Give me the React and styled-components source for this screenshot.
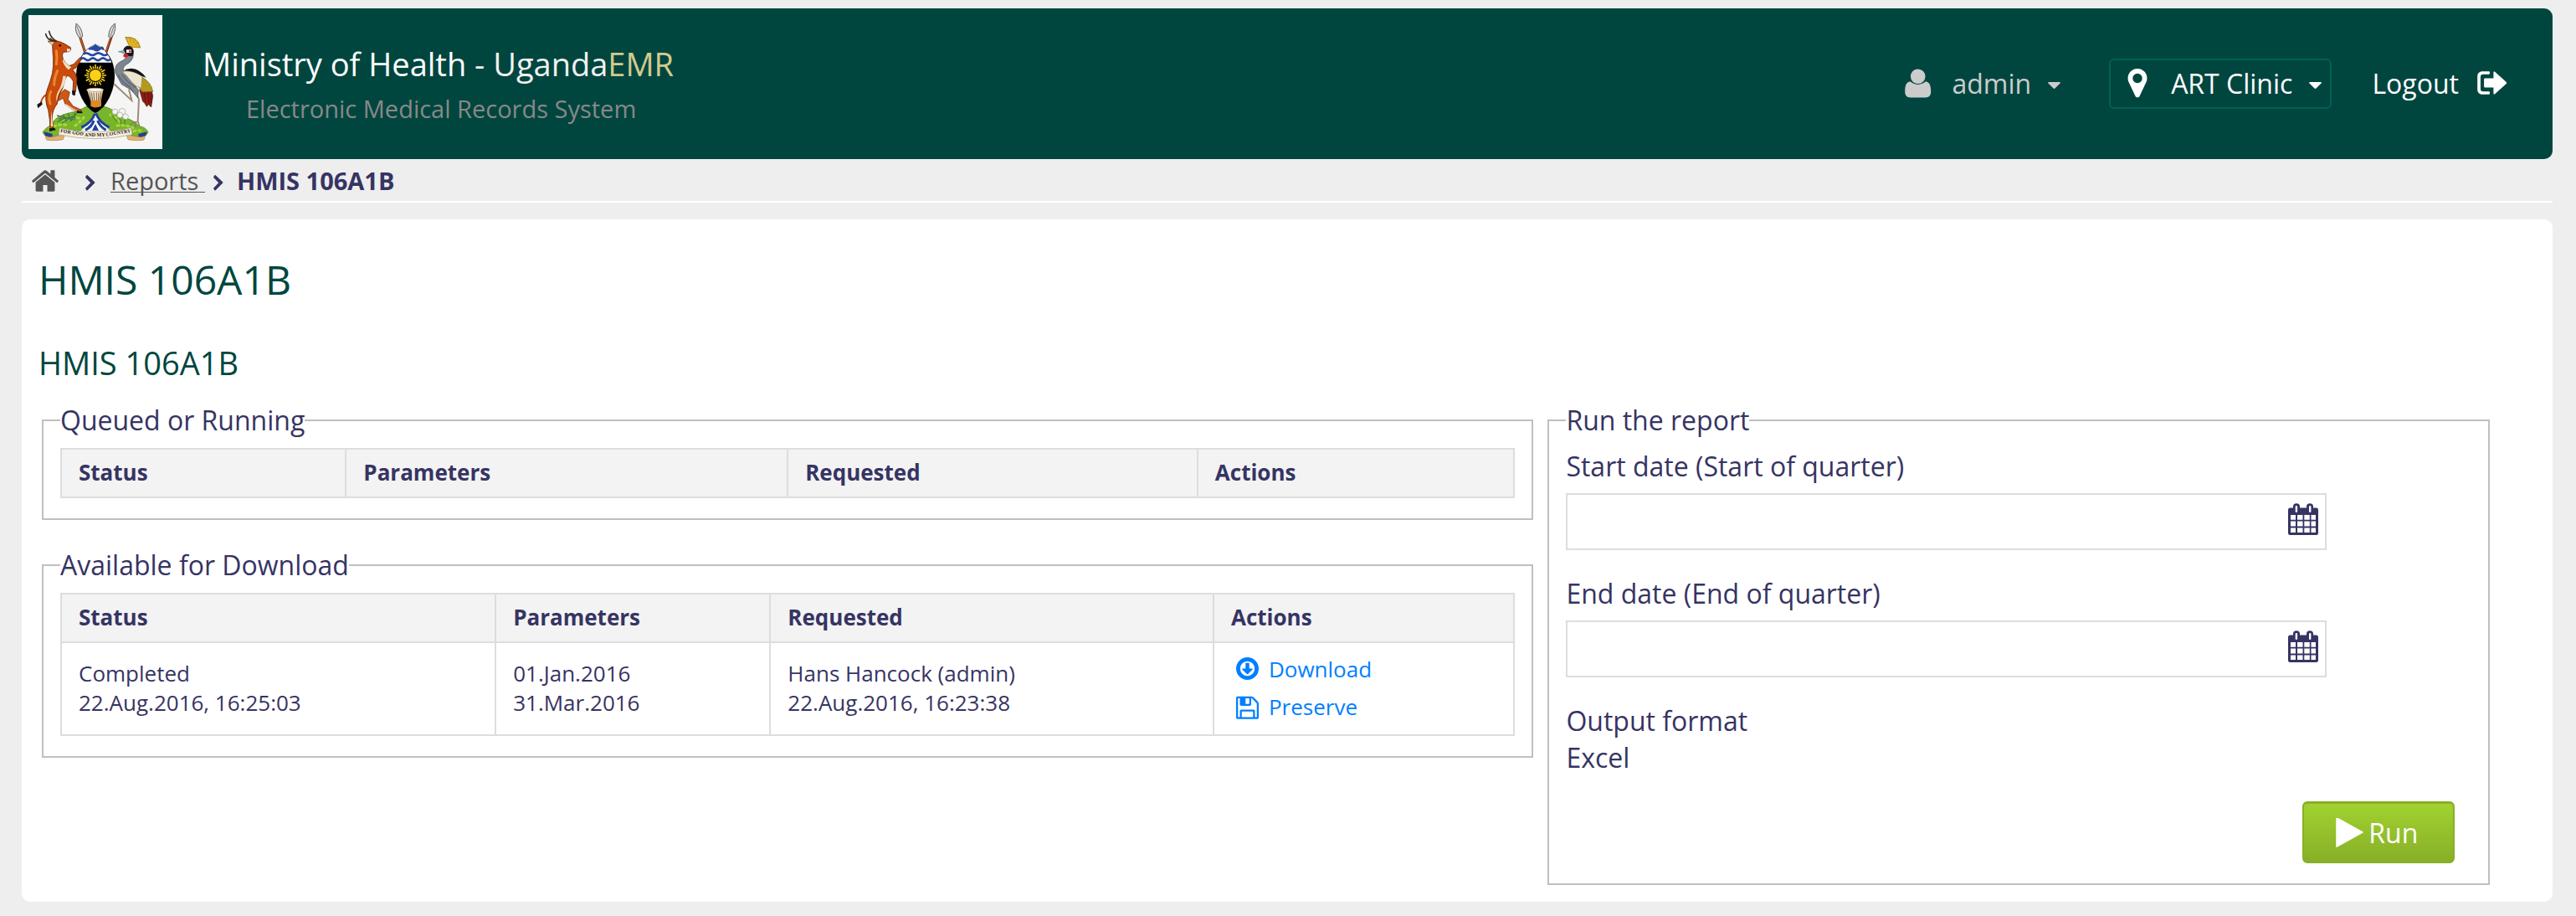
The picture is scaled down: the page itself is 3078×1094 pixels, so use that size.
import React from "react";
import styled, { createGlobalStyle } from "styled-components";

const colors = {
  page: "#eeeeee",
  brand: "#00463f",
  brandLine: "#006056",
  ink: "#363463",
  grey: "#555555",
  line: "#dddddd",
  fieldset: "#c0c0c0",
  link: "#007fff",
};

const GlobalStyle = createGlobalStyle`
  * { box-sizing: border-box; }
  body {
    margin: 0;
    background: ${colors.page};
    color: ${colors.ink};
    font-family: "Open Sans", "Noto Sans", sans-serif;
    font-size: 32px;
    line-height: 44px;
  }
  button, input { font: inherit; color: inherit; }
`;

const Page = styled.div`
  padding: 10px 28px 16px 26px;
`;

const Header = styled.header`
  display: flex;
  align-items: center;
  min-height: 180px;
  padding: 8px 54px 8px 8px;
  border-radius: 10px;
  background: ${colors.brand};
  color: #fff;
`;

const Logo = styled.a`
  display: block;
  align-self: flex-start;
  width: 160px;
  height: 160px;
  background: #f5f5f5;
`;

const Brand = styled.div`
  flex: 1;
  display: flex;
  flex-direction: column;
  gap: 8px;
  padding-left: 48px;
`;

const BrandName = styled.div`
  font-size: 38px;
  line-height: 52px;
`;

const Product = styled.span`
  color: #f1f1f1;
  em {
    font-style: normal;
    color: #d3ca8e;
  }
`;

const Tagline = styled.div`
  padding-left: 52px;
  font-size: 29px;
  line-height: 40px;
  color: #888888;
`;

const Nav = styled.nav`
  display: flex;
  align-items: center;
`;

const NavButton = styled.button`
  display: flex;
  align-items: center;
  gap: 20px;
  margin-right: ${(p) => (p.$framed ? 48 : 58)}px;
  padding: ${(p) => (p.$framed ? "6px 10px 6px 20px" : "8px 0")};
  border: ${(p) => (p.$framed ? `2px solid ${colors.brandLine}` : "0")};
  border-radius: 6px;
  background: none;
  color: ${(p) => (p.$framed ? "#fff" : "#cccccc")};
  cursor: pointer;
`;

const NavText = styled.span`
  padding-left: ${(p) => (p.$wide ? 8 : 4)}px;
`;

const LogoutLink = styled.a`
  display: flex;
  align-items: center;
  gap: 22px;
  color: #fff;
  text-decoration: none;
`;

const Icon = styled.svg`
  display: block;
  flex: none;
  fill: currentColor;
`;

const Crumbs = styled.nav`
  display: flex;
  align-items: center;
  padding: 6px 12px 4px;
  border-bottom: 2px solid #fff;
  font-size: 29px;
  line-height: 40px;
`;

const HomeLink = styled.a`
  padding-right: 32px;
  color: ${colors.grey};
`;

const CrumbLink = styled.a`
  padding: 0 10px 0 18px;
  color: ${colors.grey};
  text-decoration-thickness: 1px;
  text-underline-offset: 2px;
  text-decoration-skip-ink: none;
`;

const CrumbCurrent = styled.span`
  padding-left: 16px;
  font-weight: 700;
`;

const Panel = styled.main`
  margin-top: 20px;
  padding: 39px 20px 20px;
  border-radius: 10px;
  background: #fff;
`;

const PageTitle = styled.h1`
  margin: 0 0 40px;
  font-size: 48px;
  line-height: 66px;
  font-weight: 400;
  color: ${colors.brand};
`;

const ReportTitle = styled.h2`
  margin: 0 0 21px;
  font-size: 38px;
  line-height: 52px;
  font-weight: 400;
  color: ${colors.brand};
`;

const Columns = styled.div`
  display: grid;
  grid-template-columns: 60% 38%;
  gap: 9px;
  align-items: start;
`;

const Fieldset = styled.fieldset`
  min-width: 0;
  margin: 0 4px;
  padding: 11px 20px 24px;
  border: 2px solid ${colors.fieldset};

  & + & {
    margin-top: 32px;
  }
`;

const Legend = styled.legend`
  padding: 0;
`;

const Table = styled.table`
  width: 100%;
  table-layout: fixed;
  border-collapse: collapse;
  font-size: 26px;
  line-height: 35px;
`;

const Th = styled.th`
  width: ${(p) => p.$w}%;
  padding: 10px 20px 11px;
  border: 2px solid ${colors.line};
  background: #f3f3f3;
  text-align: left;
  font-weight: 700;
`;

const Td = styled.td`
  padding: 9px 20px 10px;
  border: 2px solid ${colors.line};
  vertical-align: middle;
`;

const Action = styled.a`
  display: flex;
  align-items: center;
  gap: 12px;
  padding: 5px 0 5px 6px;
  color: ${colors.link};
  text-decoration: none;
`;

const Field = styled.div`
  width: 84%;
  margin-bottom: 30px;
`;

const Label = styled.label`
  display: block;
  margin-bottom: 10px;
`;

const DateBox = styled.div`
  display: flex;
  align-items: flex-start;
  height: 68px;
  border: 2px solid ${colors.line};
`;

const DateInput = styled.input`
  flex: 1;
  min-width: 0;
  height: 100%;
  padding: 0 10px;
  border: 0;
  background: transparent;
`;

const IconButton = styled.button`
  padding: 10px 8px;
  border: 0;
  background: none;
  cursor: pointer;
`;

const Output = styled.div`
  margin-bottom: 30px;
`;

const Footer = styled.div`
  display: flex;
  justify-content: flex-end;
  padding-right: 20px;
`;

const RunButton = styled.button`
  display: flex;
  align-items: center;
  gap: 6px;
  height: 74px;
  padding: 0 42px 0 38px;
  border: 2px solid #88af28;
  border-top-width: 3px;
  border-radius: 6px;
  background: linear-gradient(#a1d22f, #88af28);
  color: #fff;
  cursor: pointer;
`;

const Motto = styled.text`
  font-family: "Liberation Serif", serif;
  font-size: 18px;
  font-weight: 700;
  text-anchor: middle;
  fill: #222;
`;

const HomeIcon = () => (
  <Icon width="32" height="26" viewBox="89 253 1614 1283" aria-hidden="true">
    <path d="M1472 992v480q0 26-19 45t-45 19h-384v-384h-256v384h-384q-26 0-45-19t-19-45v-480q0-1 .5-3t.5-3l575-474 575 474q1 2 1 6zm223-69l-62 74q-8 9-21 11h-3q-13 0-21-7l-692-577-692 577q-12 8-24 7-13-2-21-11l-62-74q-8-10-7-23.5t11-21.5l719-599q32-26 76-26t76 26l244 204v-195q0-14 9-23t23-9h192q14 0 23 9t9 23v408l219 182q10 8 11 21.5t-7 23.5z" />
  </Icon>
);

const ChevronIcon = () => (
  <Icon width="12" height="40" viewBox="0 0 12 40" aria-hidden="true">
    <path d="M2.6 13.2 11 21.2q.8.8 0 1.6L2.6 31.2q-.6.5-1.1 0L.3 29.6q-.5-.6 0-1.2L6.2 22.2.3 16.2q-.5-.6 0-1.2l1.2-1.8q.5-.5 1.1 0z" />
  </Icon>
);

const UserIcon = () => (
  <Icon width="32" height="36" viewBox="0 0 32 36" aria-hidden="true">
    <circle cx="15.7" cy="9.2" r="8.8" />
    <path d="M6.5 15.3C1.8 15.9.2 20.2.2 27.5c0 4.800 2.600 6.900 6.300 6.900h18.400c3.700 0 6.300-2.100 6.300-6.900 0-7.300-1.600-11.600-6.300-12.200-2.300 2-5.300 3.600-9.200 3.600s-6.900-1.600-9.200-3.600z" />
  </Icon>
);

const PinIcon = () => (
  <Icon width="24" height="36" viewBox="384 128 1024 1610" aria-hidden="true">
    <path d="M1152 640q0-106-75-181t-181-75-181 75-75 181 75 181 181 75 181-75 75-181zm256 0q0 109-33 179l-364 774q-16 33-47.500 52t-67.500 19-67.500-19-46.500-52l-365-774q-33-70-33-179 0-212 150-362t362-150 362 150 150 362z" />
  </Icon>
);

const CaretIcon = () => (
  <Icon width="15" height="20" viewBox="0 0 15 20" aria-hidden="true">
    <path d="M1 8h13q1.300.3.500 1.500l-6 6q-1 .8-2 0l-6-6Q-.3 8.300 1 8z" />
  </Icon>
);

const LogoutIcon = () => (
  <Icon width="36" height="30" viewBox="0 0 36 30" aria-hidden="true">
    <path d="M14 .2H6.500C2.500.2.200 2.500.200 6.500v15c0 4 2.300 6.300 6.300 6.300H14q1-.1 1-1.200v-1.200q0-1-1-1.100H7c-2 0-3.100-1-3.100-3V6.700c0-2 1.100-3 3.100-3h7q1-.1 1-1.200V1.400Q15 .2 14 .2z" />
    <path d="M9.400 8.500h10V2q0-2.700 2-1.100l13.300 12.200q1 .9 0 1.800L21.400 27.100q-2 1.600-2-1.100v-6.500h-10q-1.300 0-1.300-1.300V9.800q0-1.300 1.300-1.300z" />
  </Icon>
);

const DownloadIcon = () => (
  <Icon width="27" height="32" viewBox="0 0 27 32" aria-hidden="true">
    <path fillRule="evenodd" d="M13.500 1a13.500 13.500 0 1 1 0 27 13.500 13.500 0 0 1 0-27zm0 4.800a8.700 8.700 0 1 0 0 17.400 8.700 8.700 0 0 0 0-17.400z" />
    <path d="M11.300 7.700h4.400v6.700h3.700q1 .3.300 1.100l-5.500 5.500q-.7.600-1.400 0l-5.500-5.500q-.7-.8.300-1.100h3.700z" />
  </Icon>
);

const SaveIcon = () => (
  <Icon width="27" height="28" viewBox="128 90 1536 1593" aria-hidden="true">
    <path d="M512 1536h768v-384h-768v384zm896 0h128v-896q0-14-10-38.500t-20-34.500l-281-281q-10-10-34-20t-39-10v416q0 40-28 68t-68 28h-576q-40 0-68-28t-28-68v-416h-128v1280h128v-416q0-40 28-68t68-28h832q40 0 68 28t28 68v416zm-384-928v-320q0-13-9.500-22.500t-22.500-9.500h-192q-13 0-22.500 9.500t-9.500 22.500v320q0 13 9.500 22.500t22.500 9.500h192q13 0 22.500-9.500t9.500-22.500zm640 32v928q0 40-28 68t-68 28h-1344q-40 0-68-28t-28-68v-1344q0-40 28-68t68-28h928q40 0 88 20t76 48l280 280q28 28 48 76t20 88z" />
  </Icon>
);

const CalendarIcon = () => (
  <Icon width="36" height="39" viewBox="0 0 36 39" aria-hidden="true">
    <path
      fillRule="evenodd"
      d="M2.500 5.500H6V4q0-3.700 4-3.700T14 4v1.500h8V4q0-3.700 4-3.700T30 4v1.500h3.500Q36 5.500 36 8v27.500q0 2.500-2.500 2.500h-31Q0 38 0 35.500V8q0-2.500 2.500-2.500zM8.700 4v6q0 1 1.200 1t1.200-1V4q0-1-1.200-1T8.700 4zM25 4v6q0 1 1.200 1t1.200-1V4q0-1-1.200-1T25 4zM3 14v5.800h6V14zm8 0v5.800h6.500V14zm8.300 0v5.800h6.500V14zm8.200 0v5.800H33V14zM3 21.600v6h6v-6zm8 0v6h6.500v-6zm8.300 0v6h6.500v-6zm8.200 0v6H33v-6zM3 29.400v5.600h6v-5.600zm8 0v5.600h6.500v-5.600zm8.300 0v5.600h6.500v-5.600zm8.200 0v5.600H33v-5.600z"
    />
  </Icon>
);

const PlayIcon = () => (
  <Icon width="33" height="36" viewBox="192 160 1407 1558" aria-hidden="true">
    <path d="M1576 927l-1328 738q-23 13-39.500 3t-16.500-36v-1472q0-26 16.500-36t39.500 3l1328 738q23 13 23 31t-23 31z" />
  </Icon>
);

const sunRays = Array.from({ length: 24 }, (_, i) => i * 15);

const CoatOfArms = () => (
  <svg width="160" height="160" viewBox="102 54 480 480" role="img" aria-label="Uganda coat of arms">
    {/* spears */}
    <g>
      <path d="M282 118 382 420M404 118 302 420" stroke="#6b2410" strokeWidth="9" />
      <path d="M284 124 382 420M400 124 302 420" stroke="#bf5a24" strokeWidth="5" />
      <path d="M273 84q21 14 23 47l-8 6q-15-12-17-34z" fill="#d9d9d9" stroke="#444" strokeWidth="2.5" />
      <path d="M412 84q-21 14-23 47l8 6q14-12 16-34z" fill="#d9d9d9" stroke="#444" strokeWidth="2.5" />
      <path d="M275 92l15 40M409 92l-14 40" stroke="#555" strokeWidth="2" />
    </g>

    {/* mound */}
    <path d="M153 474Q160 460 186 446Q196 416 250 404Q284 398 304 384Q322 378 342 400Q364 378 382 384Q404 392 452 422Q484 434 500 452Q524 456 531 474Q526 488 500 494Q420 462 342 462Q262 462 180 494Q158 488 153 474Z" fill="#78b52a" stroke="#4c7c1a" strokeWidth="2" />
    <path d="M178 460q30-18 60-12M225 434q30-16 64-10M270 450q20-16 34-34M395 412q24 8 34 24M420 450q32-4 56 8M480 470q16-6 34 2" stroke="#a9d63c" strokeWidth="9" fill="none" strokeLinecap="round" strokeDasharray="6 12" />
    <path d="M204 414l60 14M210 426l54-6M222 440l40-24M238 436l-12-26M254 434l-10-28M268 430l-2-26M206 436l24-10M276 402l-22 32" stroke="#477a45" strokeWidth="4" fill="none" />
    <g fill="#f4f4f4" stroke="#9aa88e" strokeWidth="2">
      <circle cx="412" cy="400" r="10" />
      <circle cx="438" cy="400" r="12" />
      <circle cx="430" cy="412" r="10" />
      <circle cx="450" cy="418" r="10" />
    </g>
    <path d="M400 412l20 24M428 424l8 20M448 428l-2 18" stroke="#4f8b2c" strokeWidth="4" />

    {/* river */}
    <path d="M336 404h12q10 34 46 64h-104q36-30 46-64z" fill="#fff" />
    <g stroke="#20419a" strokeWidth="9" fill="none">
      <path d="M340 406q-10 34-48 50M344 406q12 34 48 50" />
      <path d="M336 432q-6 22-30 34M350 432q8 22 30 34" />
    </g>
    <path d="M342 444l12 24h-24z" fill="#20419a" />

    {/* shield */}
    <path d="M342 157c44 22 68 60 69 112 0 58-30 116-69 136-39-20-69-78-69-136 1-52 25-90 69-112z" fill="#000" />
    <path d="M342 157c26 14 46 34 58 67H284c12-33 32-53 58-67z" fill="#fff" />
    <g fill="none" stroke="#274a9e" strokeWidth="8">
      <path d="M318 177q10-8 20 0t20-2 12 4" />
      <path d="M298 194q11-8 22 0t22 0 22 0 22 0" />
      <path d="M288 212q9-8 18 0t18 0 18 0 18 0 18 0 18 0" />
    </g>
    <path d="M342 158q14 8 24 18-24 8-48 0 10-10 24-18z" fill="#274a9e" />
    <g stroke="#f6d21c" strokeWidth="4.5">
      {sunRays.map((angle) => (
        <path key={angle} d={angle % 30 ? "M342 246v-9" : "M342 246v-15"} transform={`rotate(${angle} 342 270)`} />
      ))}
    </g>
    <circle cx="342" cy="270" r="22" fill="#fbd116" stroke="#1a1200" strokeWidth="2" />
    <path d="M312 322h58l-7 38v20q-22 10-38 0v-20z" fill="#c98b3b" />
    <path d="M313 324l12 36h32l12-36z" fill="#efe4d0" />
    <path d="M320 330l7 28M328 332l4 28M336 332l2 28M346 332v28M354 332l-2 28M362 330l-5 28" stroke="#6b4a2a" strokeWidth="2.5" />
    <ellipse cx="341" cy="322" rx="30" ry="6" fill="#fff" stroke="#bda27c" strokeWidth="3" />
    <path d="M326 362h32l-2 18q-14 10-28 0z" fill="#e08b1c" />

    {/* kob */}
    <path d="M192 150Q168 142 164 122M204 148Q182 138 176 112M208 150Q190 148 180 138" fill="none" stroke="#3b2c20" strokeWidth="5" strokeLinecap="round" />
    <path d="M168 338Q150 348 146 370" fill="none" stroke="#c64a0e" strokeWidth="6" />
    <path d="M150 364L152 374L136 388L133 374Z" fill="#161616" />
    <path d="M210 340L232 320L250 330L244 356L262 380L292 394L290 402L262 394L234 374L226 352L208 362Z" fill="#cf5714" stroke="#6e2606" strokeWidth="2" />
    <path d="M236 372L264 390L286 400L262 394L234 376Z" fill="#f2dcb6" />
    <path d="M188 156L172 148L194 149Q210 144 230 156L253 170Q257 180 248 185L226 187Q221 198 226 212Q234 230 248 236L264 230L287 206L291 214L273 242L260 250Q273 260 276 282L271 328L261 328L263 292Q256 276 242 270Q233 278 230 298Q226 318 214 336Q206 352 205 372Q188 392 187 420L191 462L180 464Q179 424 173 394Q160 362 166 332Q172 312 180 290Q190 262 191 236Q192 206 189 184Z" fill="#cb4a0c" stroke="#5f2204" strokeWidth="2.5" />
    <path d="M227 214Q236 232 256 240L246 250Q228 236 224 216ZM236 272Q236 300 218 322Q206 340 204 364Q198 350 208 328Q222 306 226 272ZM184 396L190 452L182 454Z" fill="#f3dfbd" />
    <path d="M206 254Q194 280 194 304M182 328Q172 348 180 372M202 182Q206 208 202 230" fill="none" stroke="#e98a2a" strokeWidth="9" strokeLinecap="round" />
    <path d="M176 460L196 458L200 466L178 471ZM276 396L294 400L296 406L276 405ZM258 324L271 326L269 343L259 340Z" fill="#151515" />
    <circle cx="215" cy="163" r="4" fill="#111" />
    <path d="M240 174L254 176L250 184L240 185Z" fill="#f4e4cb" />
    <path d="M172 148L196 150L188 162Z" fill="#f0c99a" stroke="#5f2204" strokeWidth="1.5" />

    {/* crested crane */}
    <path d="M449 133Q496 130 503 171L465 168Z" fill="#d6a71b" stroke="#8e6a10" strokeWidth="2" />
    <path d="M466 162l-8-26M470 162l6-24M474 164l18-20M476 166l24-6" stroke="#f3d44b" strokeWidth="2" />
    <path d="M408 300L472 360L470 350L462 320M480 318L498 356L494 436" fill="none" stroke="#a08c78" strokeWidth="6" />
    <path d="M466 448L482 436L496 438L500 452M484 436l2 20" fill="none" stroke="#8c7768" strokeWidth="4" />
    <path d="M500 322l44 4 4 18-6 40-10-10-6 8-8-14-6-4z" fill="#8c1d16" stroke="#4a0c08" strokeWidth="2" />
    <path d="M516 330l6 36M530 330l4 40M540 332l2 36" stroke="#4a0c08" strokeWidth="2" />
    <path d="M508 276q34 18 40 52l-38 2-14-20z" fill="#b39a1e" stroke="#6d5c0e" strokeWidth="2" />
    <path d="M456 196Q454 212 430 222Q408 234 414 262L436 302L470 322L494 350L496 322L478 300L444 256Q436 244 452 232Q478 218 478 194Z" fill="#7d858f" stroke="#3b4148" strokeWidth="2" />
    <path d="M424 268q12 26 38 42M436 266q20 30 50 48M462 308l16 22" fill="none" stroke="#4d545c" strokeWidth="3" />
    <path d="M438 256q40-6 72 18l-4 42q-18-4-34-22-14-20-34-38z" fill="#eee5cf" stroke="#8a8069" strokeWidth="2" />
    <path d="M440 254q46-26 84 24l-14-4q-34-24-70-20z" fill="#141414" />
    <path d="M442 178Q450 160 466 166Q482 172 479 192L474 202L454 200Z" fill="#17181c" />
    <path d="M446 180l-22 5 20 6z" fill="#7fb2bd" stroke="#3c6972" strokeWidth="1.5" />
    <path d="M453 178h18v11h-18z" fill="#fff" />
    <circle cx="466" cy="184" r="4" fill="#c51b24" />
    <path d="M444 192Q460 188 460 202Q448 210 442 202Z" fill="#d21d2a" />

    {/* scroll */}
    <path d="M158 472l30 8v14l-26-6zM526 472l-30 8v14l26-6z" fill="#243f8e" />
    <path d="M164 486q8 8 24 4l44-6-6 16q-30 6-58 2-6-6-4-16zM519 486q-8 8-24 4l-42-6 6 16q28 6 56 2 6-6 4-16z" fill="#e0b173" stroke="#9c6f3c" strokeWidth="1.5" />
    <path d="M214 458q128 30 256 0l4 24q-132 30-264 0z" fill="#f7f0dc" stroke="#a6967a" strokeWidth="2" />
    <Motto transform="translate(257 480) rotate(8)">FOR GOD</Motto>
    <Motto transform="translate(340 488)">AND MY</Motto>
    <Motto transform="translate(425 481) rotate(-9)">COUNTRY</Motto>
  </svg>
);

const queuedColumns = [
  ["Status", 19.6],
  ["Parameters", 30.4],
  ["Requested", 28.2],
  ["Actions", 21.8],
];

const availableColumns = [
  ["Status", 29.9],
  ["Parameters", 18.9],
  ["Requested", 30.5],
  ["Actions", 20.7],
];

const HeadRow = ({ columns }) => (
  <thead>
    <tr>
      {columns.map(([name, width]) => (
        <Th key={name} $w={width} scope="col">
          {name}
        </Th>
      ))}
    </tr>
  </thead>
);

const DateField = ({ id, label }) => (
  <Field>
    <Label htmlFor={id}>{label}</Label>
    <DateBox>
      <DateInput id={id} type="text" />
      <IconButton type="button" aria-label={`Pick ${label}`}>
        <CalendarIcon />
      </IconButton>
    </DateBox>
  </Field>
);

export default function App() {
  return (
    <>
      <GlobalStyle />
      <Page>
        <Header>
          <Logo href="#home">
            <CoatOfArms />
          </Logo>
          <Brand>
            <BrandName>
              Ministry of Health{" "}
              <Product>
                - Uganda<em>EMR</em>
              </Product>
            </BrandName>
            <Tagline>Electronic Medical Records System</Tagline>
          </Brand>
          <Nav>
            <NavButton type="button">
              <UserIcon />
              <NavText>admin</NavText>
              <CaretIcon />
            </NavButton>
            <NavButton type="button" $framed>
              <PinIcon />
              <NavText $wide>ART Clinic</NavText>
              <CaretIcon />
            </NavButton>
            <LogoutLink href="#logout">
              Logout
              <LogoutIcon />
            </LogoutLink>
          </Nav>
        </Header>

        <Crumbs aria-label="Breadcrumb">
          <HomeLink href="#home" aria-label="Home">
            <HomeIcon />
          </HomeLink>
          <ChevronIcon />
          <CrumbLink href="#reports">Reports{"\u00a0"}</CrumbLink>
          <ChevronIcon />
          <CrumbCurrent>HMIS 106A1B</CrumbCurrent>
        </Crumbs>

        <Panel>
          <PageTitle>HMIS 106A1B</PageTitle>
          <ReportTitle>HMIS 106A1B</ReportTitle>
          <Columns>
            <div>
              <Fieldset>
                <Legend>Queued or Running</Legend>
                <Table>
                  <HeadRow columns={queuedColumns} />
                </Table>
              </Fieldset>
              <Fieldset>
                <Legend>Available for Download</Legend>
                <Table>
                  <HeadRow columns={availableColumns} />
                  <tbody>
                    <tr>
                      <Td>
                        Completed
                        <br />
                        22.Aug.2016, 16:25:03
                      </Td>
                      <Td>
                        01.Jan.2016
                        <br />
                        31.Mar.2016
                      </Td>
                      <Td>
                        Hans Hancock (admin)
                        <br />
                        22.Aug.2016, 16:23:38
                      </Td>
                      <Td>
                        <Action href="#download">
                          <DownloadIcon />
                          Download
                        </Action>
                        <Action href="#preserve">
                          <SaveIcon />
                          Preserve
                        </Action>
                      </Td>
                    </tr>
                  </tbody>
                </Table>
              </Fieldset>
            </div>
            <Fieldset>
              <Legend>Run the report</Legend>
              <DateField id="start-date" label="Start date (Start of quarter)" />
              <DateField id="end-date" label="End date (End of quarter)" />
              <Output>
                <div>Output format</div>
                <div>Excel</div>
              </Output>
              <Footer>
                <RunButton type="button">
                  <PlayIcon />
                  Run
                </RunButton>
              </Footer>
            </Fieldset>
          </Columns>
        </Panel>
      </Page>
    </>
  );
}
